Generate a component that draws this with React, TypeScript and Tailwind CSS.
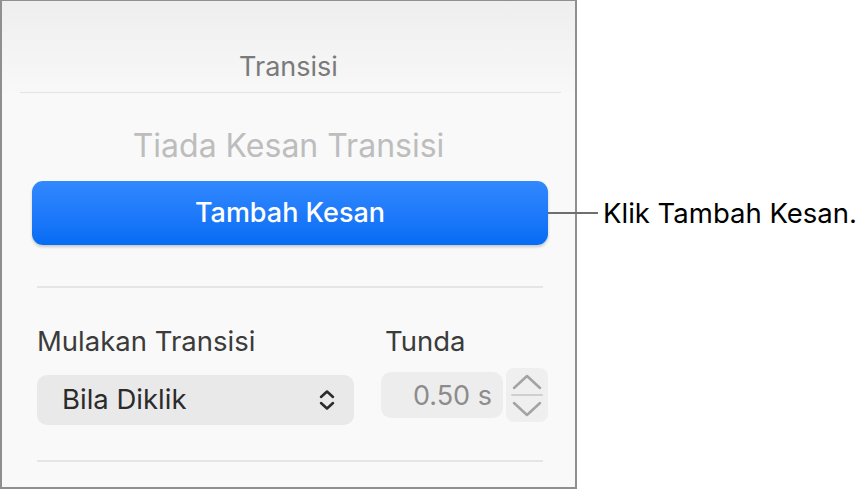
import React from "react";

export default function App() {
  return (
    <div
      className="relative flex w-[862px] h-[489px] bg-white overflow-hidden"
      style={{ fontFamily: "Inter, 'Noto Sans', sans-serif" }}
    >
      <div className="w-[577px] h-[489px] border-x-2 border-t border-b-2 border-[#8f8f8f] bg-[#f9f9f9] flex flex-col">
        <div className="bg-gradient-to-b from-[#eeeeee] to-[#f8f8f8] h-[91px] flex flex-col justify-end">
          <div className="text-center text-[27px] text-[#7a7a7a] leading-[27px] h-[27px] mb-[12px]">Transisi</div>
        </div>
        <div className="ml-[18px] mr-[14px] h-px bg-[#e4e4e4]" />
        <div className="text-center text-[32px] text-[#bdbdbd] leading-[32px] h-[32px] mt-[37px]">Tiada Kesan Transisi</div>
        <div className="ml-[30px] mr-[27px] mt-[19px] h-[64px] rounded-[11px] bg-gradient-to-b from-[#3188ff] to-[#046cf4] shadow-[0_2px_3px_rgba(0,0,0,0.2)] flex items-center justify-center text-white text-[27px] font-medium">
          Tambah Kesan
        </div>
        <div className="ml-[35px] mr-[32px] mt-[41px] h-[2px] bg-[#e5e5e5]" />
        <div className="flex mt-[40px] pl-[35px] h-[28px] items-center">
          <div className="w-[348px] text-[27.5px] text-[#3b3b3b] leading-none">Mulakan Transisi</div>
          <div className="text-[27.5px] text-[#3b3b3b] leading-none">Tunda</div>
        </div>
        <div className="flex items-start mt-[12px] pl-[35px]">
          <div className="mt-[7px] w-[317px] h-[50px] rounded-[10px] bg-[#e9e9e9] flex items-center justify-between pl-[25px] pr-[19px]">
            <span className="text-[27.5px] text-[#2b2b2b] leading-none">Bila Diklik</span>
            <svg width="16" height="22" viewBox="0 0 16 22" fill="none" stroke="#2a2a2a" strokeWidth="2.5" strokeLinecap="round" strokeLinejoin="round">
              <path d="M2 8 L8 2.5 L14 8" />
              <path d="M2 14 L8 19.5 L14 14" />
            </svg>
          </div>
          <div className="ml-[27px] mt-[4px] w-[122px] h-[46px] rounded-[10px] bg-[#ededed] flex items-center justify-end pr-[11px] text-[27px] leading-none text-[#8c8c8c]">
            0.50 s
          </div>
          <div className="ml-[3px] w-[42px] h-[54px] rounded-[8px] bg-[#efefef]">
            <svg width="42" height="54" viewBox="0 0 42 54" fill="none" stroke="#a3a3a3" strokeWidth="2.5" strokeLinecap="round" strokeLinejoin="round">
              <path d="M8 20 L21 8 L34 20" />
              <path d="M6 27 L36 27" stroke="#cfcfcf" strokeWidth="2" />
              <path d="M8 35 L21 47 L34 35" />
            </svg>
          </div>
        </div>
        <div className="ml-[35px] mr-[32px] mt-[35px] h-[2px] bg-[#e5e5e5]" />
      </div>
      <div className="absolute left-[548px] top-[212px] w-[50px] h-[2px] bg-[#6f6f6f]" />
      <div className="pl-[26px] pt-[199px] text-[27.5px] text-black leading-[28px] whitespace-nowrap">
        Klik Tambah Kesan.
      </div>
    </div>
  );
}
